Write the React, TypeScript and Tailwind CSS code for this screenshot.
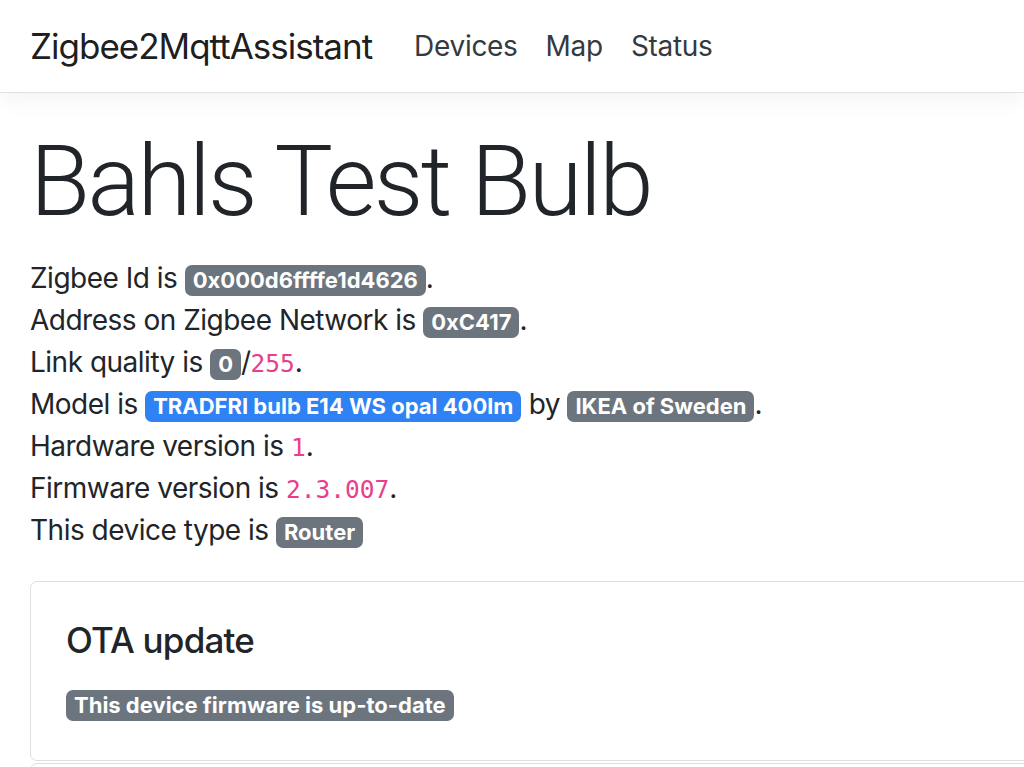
const sans = "font-['Inter','Noto_Sans',sans-serif]";
const mono = "font-['DejaVu_Sans_Mono','Liberation_Mono',monospace]";

const Badge = ({ children, tone = 'secondary' }: { children: React.ReactNode; tone?: 'secondary' | 'primary' }) => (
  <span
    className={`inline-block rounded-[7px] px-[8px] py-[5px] align-baseline text-[22px] leading-[21px] font-bold tracking-normal text-white ${
      tone === 'primary' ? 'bg-[#2f82f3]' : 'bg-[#6c757d]'
    }`}
  >
    {children}
  </span>
);

const Code = ({ children }: { children: React.ReactNode }) => (
  <code className={`${mono} text-[24.5px] leading-none tracking-normal text-[#e83e8c]`}>{children}</code>
);

export default function App() {
  return (
    <div className={`${sans} min-h-[767px] overflow-hidden bg-white text-[28px] leading-[42px] tracking-[-0.5px] text-[#212529]`}>
      {/* navbar */}
      <header className="w-full border-b border-[#dee2e6] bg-white shadow-[0_7px_21px_rgba(0,0,0,0.05)]">
        <nav className="flex items-center px-[30px] py-[15px]">
          <a className="mr-[28px] py-[5px] text-[35px] leading-[52px] tracking-[-1px] text-black/90">Zigbee2MqttAssistant</a>
          <ul className="flex items-center">
            {['Devices', 'Map', 'Status'].map(l => (
              <li key={l}>
                <a className="block px-[14px] py-[7px] text-[28px] leading-[42px] tracking-[-0.3px] text-[#343a40]">{l}</a>
              </li>
            ))}
          </ul>
        </nav>
      </header>

      <main className="mt-[30px] w-[1200px] px-[30px]">
        <h1 className="mb-[16px] font-['Roboto',sans-serif] text-[98px] leading-[118px] font-light tracking-[-2.6px]">
          Bahls Test Bulb
        </h1>

        <p className="mb-[30px]">
          Zigbee Id is <Badge>0x000d6ffffe1d4626</Badge>.<br />
          Address on Zigbee Network is <Badge>0xC417</Badge>.<br />
          Link quality is <Badge>0</Badge>/<Code>255</Code>.<br />
          Model is <Badge tone="primary">TRADFRI bulb E14 WS opal 400lm</Badge> by <Badge>IKEA of Sweden</Badge>.<br />
          Hardware version is <Code>1</Code>.<br />
          Firmware version is <Code>2.3.007</Code>.<br />
          This device type is <Badge>Router</Badge>
        </p>

        <section className="rounded-[7px] border border-black/[0.125] px-[35px] pt-[37px] pb-[36px]">
          <h5 className="mb-[21px] text-[35px] leading-[42px] font-medium tracking-[-0.8px]">OTA update</h5>
          <div>
            <Badge>This device firmware is up-to-date</Badge>
          </div>
        </section>
        <section className="mt-[2px] h-[100px] rounded-[7px] border border-black/[0.125]" />
      </main>
    </div>
  );
}
